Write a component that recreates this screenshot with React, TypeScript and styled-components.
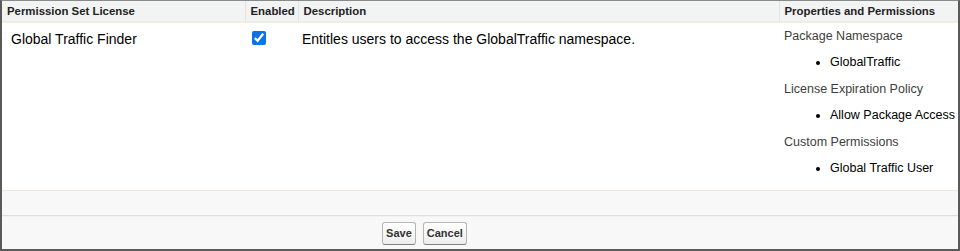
import React from "react";
import styled, { createGlobalStyle } from "styled-components";

const Global = createGlobalStyle`
  html, body { margin: 0; padding: 0; background: #fff; }
  body { font-family: "Liberation Sans", Arial, sans-serif; }
`;

const Frame = styled.div`
  width: 960px;
  height: 251px;
  box-sizing: border-box;
  border: 2px solid #5a5a5a;
  border-top: 1px solid #8a8a8a;
  display: flex;
  flex-direction: column;
  background: #fff;
`;

const Table = styled.table`
  width: 100%;
  border-collapse: collapse;
  table-layout: fixed;
`;

const Th = styled.th<{ $w?: number }>`
  box-sizing: border-box;
  ${(p) => (p.$w ? `width: ${p.$w}px;` : "")}
  background: #f2f3f3;
  text-align: left;
  font-size: 11.4px;
  font-weight: bold;
  color: #222;
  padding: 4px 5px 3px 5px;
  height: 20px;
  line-height: 13px;
  border-bottom: 2px solid #f0eee0;
  border-left: 1px solid #e3e3e3;
  white-space: nowrap;
  overflow: hidden;
  &:first-child { border-left: none; }
`;

const Td = styled.td<{ $pad?: string }>`
  box-sizing: border-box;
  vertical-align: top;
  font-size: 14px;
  color: #000;
  padding: ${(p) => p.$pad || "8px 9px"};
  height: 168px;
  border-bottom: 1px solid #ece8d2;
`;

const Check = styled.input`
  width: 14px;
  height: 14px;
  margin: 0;
  accent-color: #0b72e8;
`;

const PropLabel = styled.div`
  color: #3e3e3c;
  font-size: 12.5px;
  line-height: 26.4px;
  white-space: nowrap;
`;

const PropList = styled.ul`
  margin: 0;
  padding-left: 46px;
  list-style: disc;
  li {
    line-height: 26.4px;
    font-size: 12.5px;
    color: #000;
    white-space: nowrap;
  }
`;

const Band = styled.div`
  height: 24px;
  background: #f8f8f8;
  border-bottom: 1px solid #dddddd;
`;

const ButtonBar = styled.div`
  flex: 1;
  background: #f8f8f8;
  border-top: 1px solid #f2f2f2;
  display: flex;
  justify-content: center;
  align-items: flex-start;
  gap: 7px;
  padding-top: 5px;
  padding-right: 111px;
`;

const Btn = styled.button`
  font-family: "Liberation Sans", Arial, sans-serif;
  font-size: 11px;
  font-weight: bold;
  color: #333;
  height: 23px;
  padding: 0 3px;
  border: 1px solid #b5b5b5;
  border-bottom-color: #7f7f7f;
  border-radius: 3px;
  background: linear-gradient(#ffffff, #ededed);
  cursor: pointer;
`;

export default function App() {
  return (
    <>
      <Global />
      <Frame>
        <Table>
          <thead>
            <tr>
              <Th $w={243}>Permission Set License</Th>
              <Th $w={53}>Enabled</Th>
              <Th>Description</Th>
              <Th $w={179}>Properties and Permissions</Th>
            </tr>
          </thead>
          <tbody>
            <tr>
              <Td $pad="8px 9px">Global Traffic Finder</Td>
              <Td $pad="8px 7px">
                <Check type="checkbox" defaultChecked />
              </Td>
              <Td $pad="8px 4px">Entitles users to access the GlobalTraffic namespace.</Td>
              <Td $pad="0 0 0 5px">
                <PropLabel>Package Namespace</PropLabel>
                <PropList>
                  <li>GlobalTraffic</li>
                </PropList>
                <PropLabel>License Expiration Policy</PropLabel>
                <PropList>
                  <li>Allow Package Access</li>
                </PropList>
                <PropLabel>Custom Permissions</PropLabel>
                <PropList>
                  <li>Global Traffic User</li>
                </PropList>
              </Td>
            </tr>
          </tbody>
        </Table>
        <Band />
        <ButtonBar>
          <Btn>Save</Btn>
          <Btn>Cancel</Btn>
        </ButtonBar>
      </Frame>
    </>
  );
}
